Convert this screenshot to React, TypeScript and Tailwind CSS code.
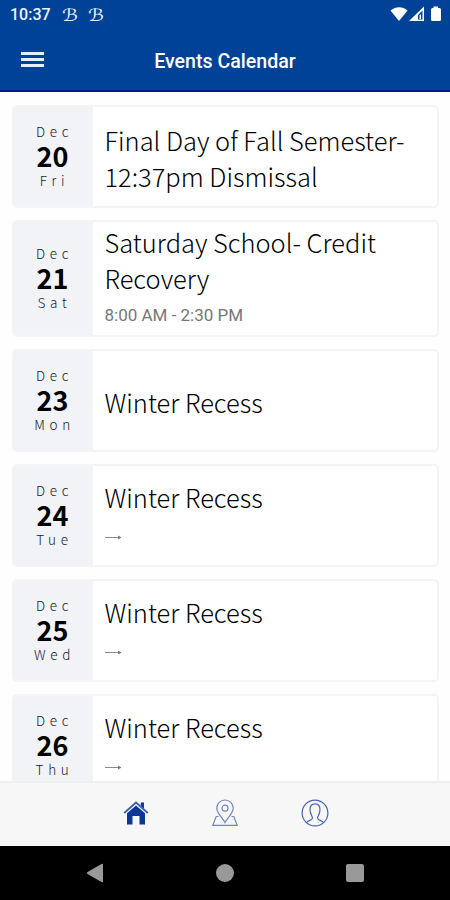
import { ReactNode } from "react";

interface CalendarEvent {
  day: string;
  weekday: string;
  title: string[];
  time?: string;
  continues?: boolean;
  height: string;
}

const EVENTS: CalendarEvent[] = [
  { day: "20", weekday: "Fri", title: ["Final Day of Fall Semester-", "12:37pm Dismissal"], height: "h-[103px]" },
  { day: "21", weekday: "Sat", title: ["Saturday School- Credit", "Recovery"], time: "8:00 AM - 2:30 PM", height: "h-[117px]" },
  { day: "23", weekday: "Mon", title: ["Winter Recess"], height: "h-[103px]" },
  { day: "24", weekday: "Tue", title: ["Winter Recess"], continues: true, height: "h-[103px]" },
  { day: "25", weekday: "Wed", title: ["Winter Recess"], continues: true, height: "h-[103px]" },
  { day: "26", weekday: "Thu", title: ["Winter Recess"], continues: true, height: "h-[103px]" },
];

function StatusBar() {
  return (
    <div className="flex h-[30px] items-center justify-between pl-[10px] pr-[8px] text-[#eef2ff]">
      <div className="flex items-center">
        <span className="w-[52px] text-[16px] font-medium leading-[30px]">10:37</span>
        <span className="w-[25.500px] origin-left scale-x-120 font-['DejaVu_Sans',sans-serif] text-[17px] leading-[30px]">ℬ</span>
        <span className="origin-left scale-x-120 font-['DejaVu_Sans',sans-serif] text-[17px] leading-[30px]">ℬ</span>
      </div>
      <svg className="mb-[2px]" width="52" height="18" viewBox="0 0 52 18" fill="#fff">
        <path d="M0.5 5.5C5.5 1 13 1 17.500 5.500L9 16Z" />
        <path fillRule="evenodd" d="M34 1.500V16H19ZM32.500 5.500L28 10V14.500H32.500Z" />
        <path d="M29.500 10.500L31 9V14H29.500Z" />
        <path d="M41 4.500Q41 3 42.500 3H43.500V1.500H48V3H49.500Q51 3 51 4.500V14.500Q51 16 49.500 16H42.500Q41 16 41 14.500Z" />
      </svg>
    </div>
  );
}

function Header() {
  return (
    <header className="shrink-0 border-b-2 border-[#001a8c] bg-[#004297]">
      <StatusBar />
      <div className="grid h-[60px] grid-cols-[1fr_auto_1fr] items-center">
        <button className="mb-[1px] ml-[21px] flex w-[23px] flex-col gap-[3px]">
          <span className="h-[3px] bg-[#e9eeff]" />
          <span className="h-[3px] bg-[#e9eeff]" />
          <span className="h-[3px] bg-[#e9eeff]" />
        </button>
        <h1 className="pt-[3px] text-[19.600px] font-medium leading-[57px] text-white">Events Calendar</h1>
      </div>
    </header>
  );
}

function ContinuesArrow() {
  return (
    <svg className="mt-[16px] mb-[5px] block" width="18" height="12" viewBox="0 0 18 12">
      <path d="M0 6.500H15" stroke="#8a8a8a" strokeWidth="1" />
      <path d="M13 4.500L16.500 6.500L13 8.500Z" fill="#777" />
    </svg>
  );
}

function EventCard({ event }: { event: CalendarEvent }) {
  return (
    <article className={`flex shrink-0 overflow-hidden rounded-[5px] border-2 border-[#f4f4f5] bg-white ${event.height}`}>
      <div className="flex w-[79px] shrink-0 flex-col items-center justify-center bg-[#f1f3f7] pb-[3px] pr-[2px] font-['Noto_Sans_CJK_JP',sans-serif]">
        <span className="-mr-[4px] text-[13.500px] font-light leading-[22px] tracking-[4.700px] text-[#222]">Dec</span>
        <span className="text-[27px] font-bold leading-[28px] text-black">{event.day}</span>
        <span className="-mr-[4px] text-[13.500px] font-light leading-[20px] tracking-[4.700px] text-[#222]">{event.weekday}</span>
      </div>
      <div className={`flex flex-1 flex-col justify-center pl-[11.500px] ${event.time || event.continues ? "pb-[4px]" : "pt-[3px]"}`}>
        {event.title.map((line) => (
          <p
            key={line}
            className="whitespace-nowrap font-['Noto_Sans_CJK_JP',sans-serif] text-[25.450px] font-light leading-[36px] text-black"
          >
            {line}
          </p>
        ))}
        {event.time && <p className="pt-[4px] text-[17px] font-normal leading-[30px] text-[#777]">{event.time}</p>}
        {event.continues && <ContinuesArrow />}
      </div>
    </article>
  );
}

function TabButton({ children }: { children: ReactNode }) {
  return <button className="flex w-[89.500px] justify-center">{children}</button>;
}

function TabBar() {
  return (
    <nav className="flex h-[65px] shrink-0 items-center justify-center border-t-2 border-[#efeff0] bg-[#f7f7f7] pb-[3px]">
      {/* Home */}
      <TabButton>
        <svg width="28" height="28" viewBox="0 0 28 28" fill="#0b3798">
          <path d="M18.800 3.500H22V10L18.800 7Z" />
          <path d="M2.200 14L14 3.500L25.800 14" fill="none" stroke="#3f5fae" strokeWidth="1.800" />
          <path d="M5 14.300L14 6.500L23 14.300V25.500H17.500V17H10.500V25.500H5Z" />
        </svg>
      </TabButton>
      {/* Map */}
      <TabButton>
        <svg width="28" height="28" viewBox="0 0 28 28" fill="none" stroke="#7186bd" strokeWidth="1.200">
          <path d="M14 23.500C12 19 5.800 14.500 5.800 9.200A8.200 8.200 0 0 1 22.200 9.200C22.200 14.500 16 19 14 23.500Z" />
          <circle cx="14" cy="9.200" r="3" />
          <path d="M7.500 17.500H5.200L1.800 26.300H26.200L22.800 17.500H20.500" />
        </svg>
      </TabButton>
      {/* Profile */}
      <TabButton>
        <svg width="28" height="28" viewBox="0 0 28 28" fill="none" stroke="#4865ae" strokeWidth="1.200">
          <circle cx="14" cy="14" r="12.900" />
          <path d="M5.500 23.500C7 21 11.500 21.500 11.500 19C11.500 17 9 15.500 9 10.500C9 6.800 11 4.800 14 4.800S19 6.800 19 10.500C19 15.500 16.500 17 16.500 19C16.500 21.500 21 21 22.500 23.500" />
        </svg>
      </TabButton>
    </nav>
  );
}

function SystemNav() {
  return (
    <div className="flex h-[54px] shrink-0 items-center justify-center gap-[112px] bg-black">
      <svg width="18" height="20" viewBox="0 0 18 20" fill="#999">
        <path d="M1.500 9L15.500 1Q17 0.300 17 2V18Q17 19.700 15.500 19L1.500 11Q0 10 1.500 9Z" />
      </svg>
      <span className="h-[18px] w-[18px] rounded-full bg-[#999]" />
      <span className="h-[18px] w-[18px] rounded-[2px] bg-[#999]" />
    </div>
  );
}

export default function App() {
  return (
    <div className="flex h-[900px] w-[450px] flex-col overflow-hidden bg-white font-[Roboto,sans-serif]">
      <Header />
      <main className="flex min-h-0 flex-1 flex-col gap-[12px] overflow-hidden bg-[#fefefe] pl-[12px] pr-[11px] pt-[13px]">
        {EVENTS.map((event) => (
          <EventCard key={event.day} event={event} />
        ))}
      </main>
      <TabBar />
      <SystemNav />
    </div>
  );
}
